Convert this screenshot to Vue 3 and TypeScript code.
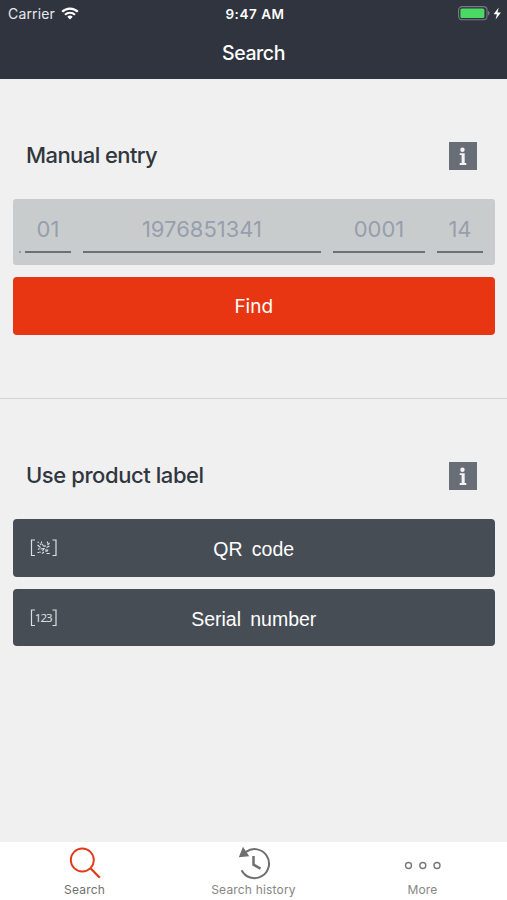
<script setup lang="ts">
import { ref } from 'vue'

type TabId = 'search' | 'history' | 'more'

const serialParts = [
  { id: 'prefix', hint: '01' },
  { id: 'article', hint: '1976851341' },
  { id: 'batch', hint: '0001' },
  { id: 'check', hint: '14' },
]
const tabs: { id: TabId; label: string }[] = [
  { id: 'search', label: 'Search' },
  { id: 'history', label: 'Search history' },
  { id: 'more', label: 'More' },
]
const activeTab = ref<TabId>('search')
</script>

<template>
  <div class="screen">
    <header class="header">
      <div class="status">
        <div class="status-left">
          <span class="carrier">Carrier</span>
          <svg class="wifi" width="18" height="13" viewBox="0 0 18 13" fill="none" stroke="#fff">
            <path d="M1.2 4.8a11 11 0 0 1 15.6 0" stroke-width="2.3" />
            <path d="M4 7.8a7.1 7.1 0 0 1 10 0" stroke-width="2.1" />
            <path d="M9 12.5 6.3 9.8a3.9 3.9 0 0 1 5.4 0z" fill="#fff" stroke="none" />
          </svg>
        </div>
        <span class="time">9:47 AM</span>
        <div class="status-right">
          <svg width="44" height="16" viewBox="0 0 44 16">
            <rect x=".6" y=".6" width="28.4" height="13.2" rx="3.5" fill="none" stroke="#767b82" stroke-width="1.1" />
            <rect x="2.4" y="2.5" width="24" height="9.4" rx="1.5" fill="#4bd863" />
            <path d="M30 4.7c2 .8 2 4 0 4.8z" fill="#767b82" />
            <path d="M40.7 1.5 35.600 8.200h3.300l-1.300 5.400 5.300-7.200h-3.400z" fill="#fff" />
          </svg>
        </div>
      </div>
      <h1 class="title">Search</h1>
    </header>

    <main class="content">
      <section class="section manual">
        <div class="section-head">
          <h2 class="heading manual-heading">Manual entry</h2>
          <button class="info" aria-label="Information">
            <svg width="28" height="28" viewBox="0 0 28 28" fill="#f1f3f5">
              <circle cx="13.500" cy="7.800" r="2.200" />
              <path d="M10.700 11.200h5v9.900h1.600v1.900h-6.600v-1.900h1.900v-8h-1.900z" />
            </svg>
          </button>
        </div>
        <div class="entry">
          <span class="tick"></span>
          <span v-for="part in serialParts" :key="part.id" class="field" :class="part.id">{{ part.hint }}</span>
        </div>
        <button class="button find">Find</button>
      </section>

      <section class="section label">
        <div class="section-head">
          <h2 class="heading">Use product label</h2>
          <button class="info" aria-label="Information">
            <svg width="28" height="28" viewBox="0 0 28 28" fill="#f1f3f5">
              <circle cx="13.500" cy="7.800" r="2.200" />
              <path d="M10.700 11.200h5v9.900h1.600v1.900h-6.600v-1.900h1.900v-8h-1.900z" />
            </svg>
          </button>
        </div>
        <button class="button dark">
          <svg class="scan" width="28" height="18" viewBox="0 0 28 18" fill="none" stroke="#dce0e3">
            <path d="M5 1H1.500v15.500H5M22.500 1H26v15.500h-3.500" stroke-width="1.200" />
            <path d="M7.500 3.200h1.500M11.500 2.500v2M17.500 2.500v2M19.500 4l-2 2M7.500 6l3 2.500M12 5l2 2.500M10 4.500l1 1.500M19.500 7l-3 1.500M15 6v2M13.500 9.500l-3 .5M8 10.500l1.500-1M14.500 9l-2 3M10 12.500v1.500M7.500 13.500H9M12 14.500l2-1.500M16 10v3M18 10.500l-1 2M16.500 14.500h3.300" stroke-width="1.100" />
          </svg>
          <span class="caption">QR&nbsp; code</span>
        </button>
        <button class="button dark serial">
          <svg class="scan" width="28" height="18" viewBox="0 0 28 18">
            <path d="M5 1H1.500v15.500H5M22.500 1H26v15.500h-3.500" fill="none" stroke="#dce0e3" stroke-width="1.200" />
            <text x="4.800" y="12.700" textLength="17.800" class="digits">123</text>
          </svg>
          <span class="caption">Serial&nbsp; number</span>
        </button>
      </section>
    </main>

    <nav class="tabs">
      <button v-for="tab in tabs" :key="tab.id" class="tab" :class="{ active: activeTab === tab.id }" @click="activeTab = tab.id">
        <svg v-if="tab.id === 'search'" width="36" height="36" viewBox="0 0 36 36" fill="none" stroke="#e03c1b">
          <circle cx="15.300" cy="14" r="11.500" stroke-width="1.900" />
          <path d="m23.500 22.300 9.300 9.400" stroke-width="2.300" />
        </svg>
        <svg v-else-if="tab.id === 'history'" width="36" height="36" viewBox="0 0 36 36" fill="none" stroke="#6f6f6f">
          <path d="M10 5.900A14.500 14.500 0 1 1 5.600 24.200" stroke-width="2" />
          <path d="M7 .800 2.800 11.200 13.200 10.200z" fill="#6f6f6f" stroke="none" />
          <path d="M17.500 10v8.700l7 4" stroke-width="2.500" />
        </svg>
        <svg v-else width="40" height="36" viewBox="0 0 40 36" fill="none" stroke="#777" stroke-width="1.400">
          <circle cx="5.500" cy="19.500" r="3" />
          <circle cx="19.800" cy="19.500" r="3" />
          <circle cx="34" cy="19.500" r="3" />
        </svg>
        <span>{{ tab.label }}</span>
      </button>
    </nav>
  </div>
</template>

<style>
body { margin: 0; }
</style>

<style scoped>
.screen {
  display: flex;
  flex-direction: column;
  box-sizing: border-box;
  width: 100%;
  height: 900px;
  background: #f0f0f0;
  color: #30373e;
  font-family: Inter, "Liberation Sans", sans-serif;
}
button {
  padding: 0;
  border: 0;
  font: inherit;
}
.header {
  height: 79px;
  flex: none;
  background: #2f343e;
  color: #fff;
}
.status {
  display: grid;
  grid-template-columns: 1fr auto 1fr;
  align-items: center;
  height: 27px;
  padding: 0 5px 0 8px;
  font-size: 13.500px;
  line-height: 28px;
}
.status-left {
  display: flex;
  align-items: center;
  gap: 6px;
}
.wifi {
  margin-bottom: 2px;
}
.carrier {
  color: #e7eaef;
  font-size: 14px;
  letter-spacing: .15px;
}
.time {
  font-weight: 600;
  letter-spacing: .550px;
}
.status-right {
  display: flex;
  justify-content: flex-end;
}
.title {
  margin: 0;
  font-size: 19.500px;
  font-weight: 500;
  letter-spacing: -.400px;
  line-height: 52px;
  text-align: center;
}
.content {
  flex: 1;
}
.section {
  display: flex;
  flex-direction: column;
  gap: 12px;
  padding: 0 12.500px 0 13px;
}
.manual {
  box-sizing: border-box;
  height: 320px;
  padding-top: 63px;
  border-bottom: 1px solid #d0d1d2;
}
.label {
  padding-top: 63px;
}
.section-head {
  display: flex;
  align-items: center;
  justify-content: space-between;
  height: 28px;
  margin-bottom: 17px;
  padding: 0 17.500px 0 13px;
}
.heading {
  margin: 0;
  padding-bottom: 2px;
  font-size: 22px;
  font-weight: 500;
  letter-spacing: -.420px;
  line-height: 28px;
  white-space: nowrap;
}
.manual-heading {
  letter-spacing: -.580px;
}
.info {
  display: block;
  width: 28px;
  height: 28px;
  background: #686d76;
}
.info svg {
  display: block;
}
.entry {
  display: flex;
  gap: 12px;
  box-sizing: border-box;
  height: 66px;
  padding: 0 0 12px 6px;
  border-radius: 3px;
  background: #c9cccd;
  color: #979ead;
  font-size: 22px;
  line-height: 61px;
  text-align: center;
}
.tick {
  align-self: flex-end;
  width: 2px;
  height: 2px;
  margin-right: -8px;
  background: #9a9ea1;
}
.field {
  flex: none;
  box-sizing: border-box;
  height: 54px;
  border-bottom: 2px solid #6c7177;
}
.prefix,
.check {
  width: 46px;
}
.article {
  width: 238px;
}
.batch {
  width: 92px;
}
.button {
  height: 57.500px;
  border-radius: 4px;
  color: #fff;
  font-size: 19px;
}
.find {
  padding-top: 2px;
  background: #e83613;
}
.dark {
  display: grid;
  grid-template-columns: 28px 1fr 28px;
  align-items: center;
  padding: 0 17px;
  background: #474d55;
  font-family: "Liberation Sans", Arial, sans-serif;
}
.serial {
  padding-top: 1px;
}
.caption {
  padding-top: 3px;
  font-size: 19.500px;
  word-spacing: -.800px;
}
.digits {
  fill: #dce0e3;
  font-family: "Noto Sans", sans-serif;
  font-size: 11.500px;
}
.tabs {
  display: grid;
  grid-template-columns: repeat(3, 1fr);
  flex: none;
  height: 58px;
  background: #fff;
}
.tab {
  display: flex;
  flex-direction: column;
  align-items: center;
  padding-top: 4px;
  background: transparent;
  color: #858585;
  font-size: 12px;
  letter-spacing: .180px;
  line-height: 16px;
}
.active {
  color: #707070;
}
</style>
